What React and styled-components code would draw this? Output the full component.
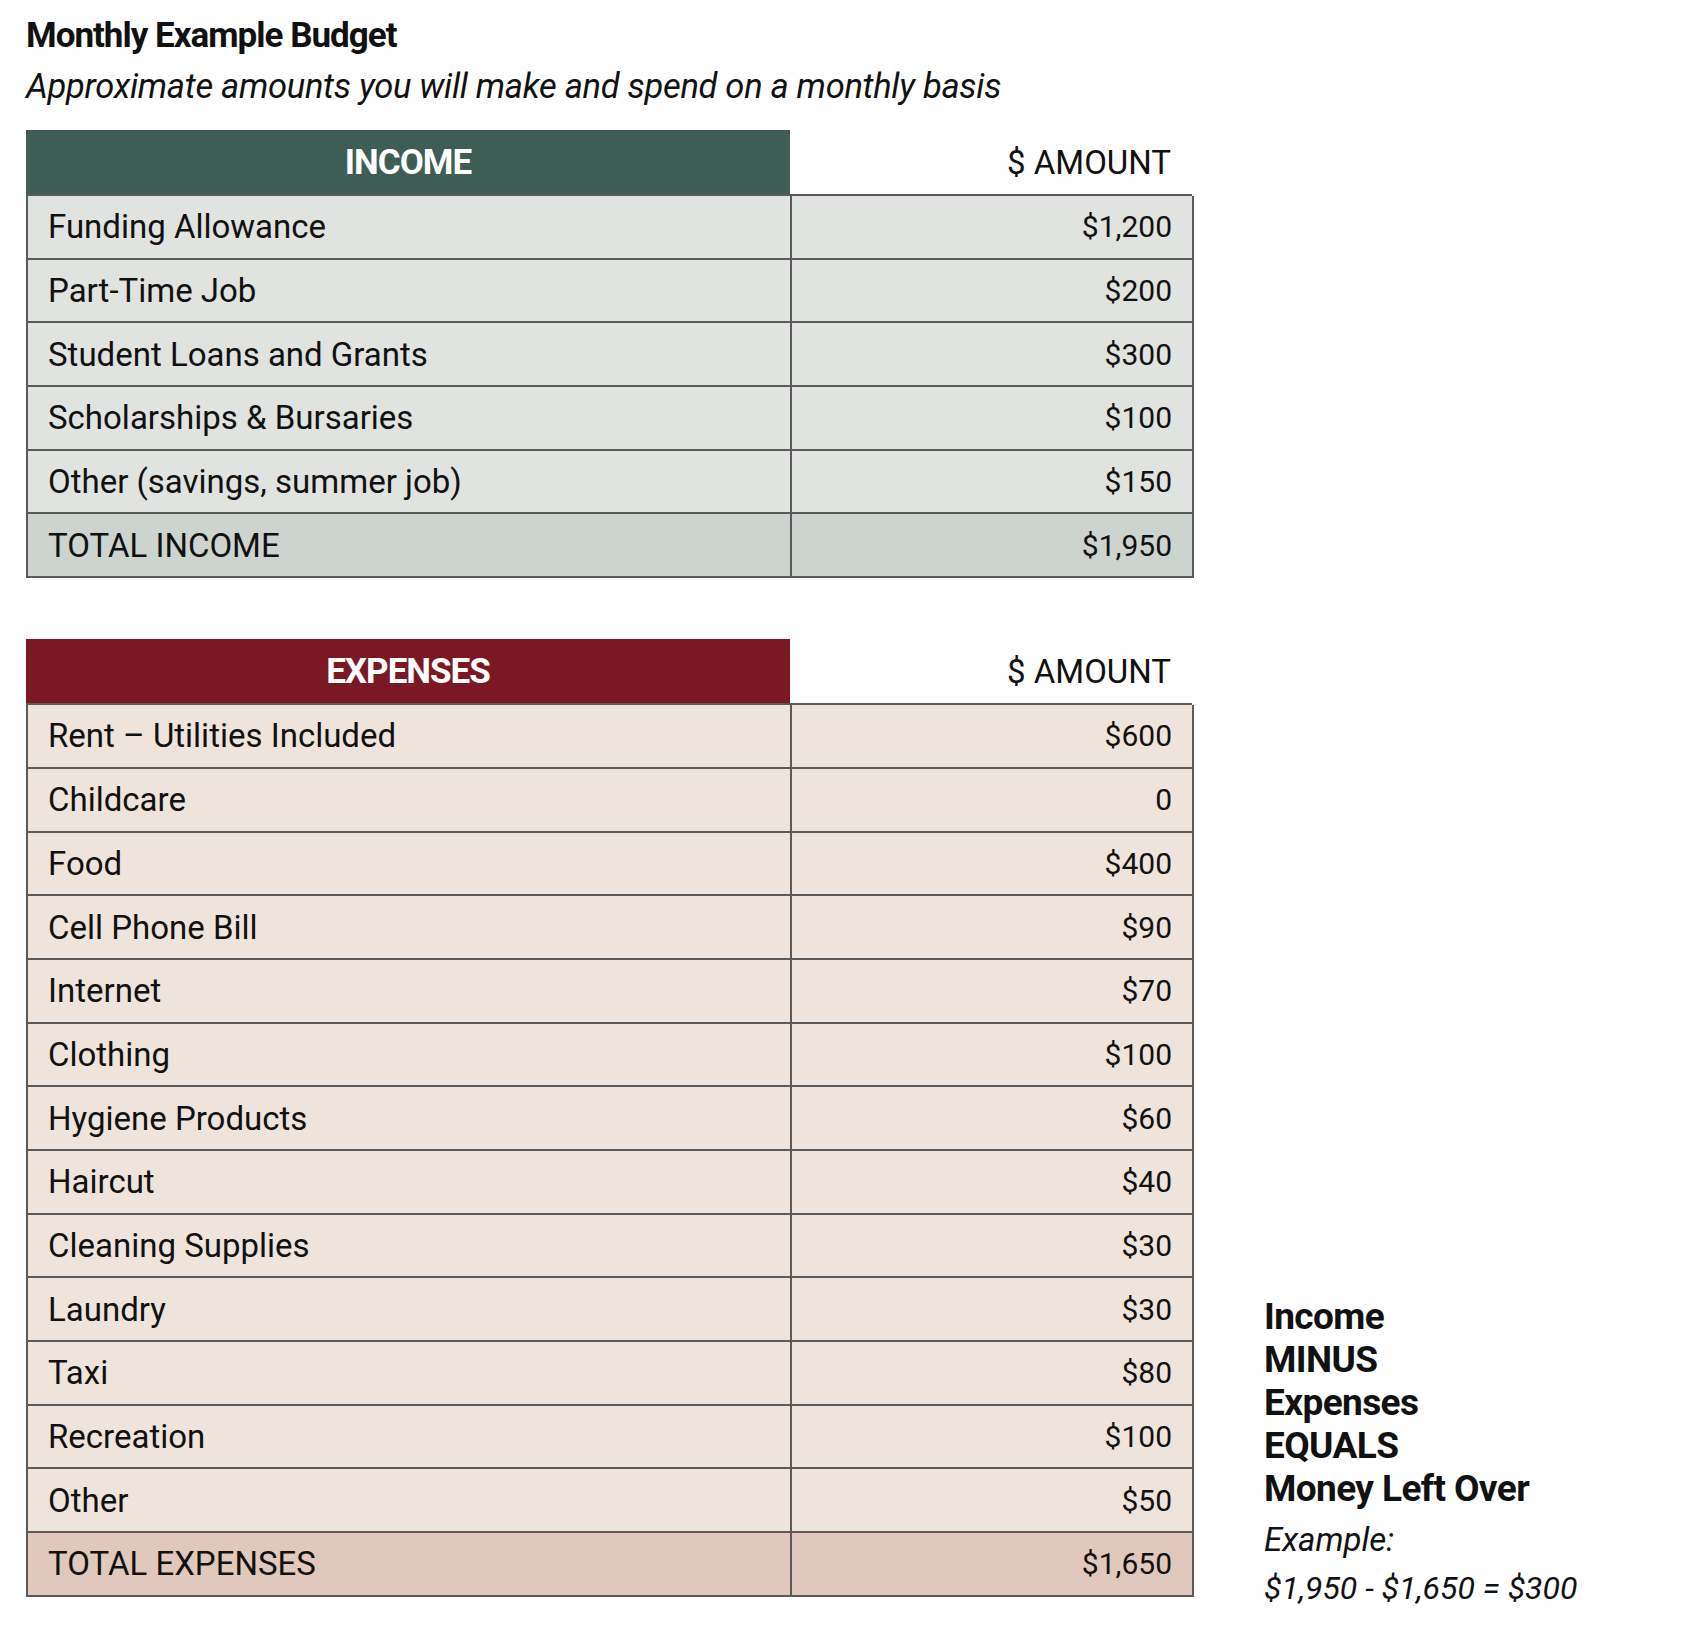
import React from 'react';
import styled, { createGlobalStyle } from 'styled-components';

const GlobalStyle = createGlobalStyle`
  body {
    margin: 0;
    background: #ffffff;
    font-family: Roboto, "Liberation Sans", sans-serif;
    color: #111;
  }
`;

const Page = styled.div`
  padding: 16px 0 40px 26px;
`;

const Title = styled.h1`
  margin: 0;
  font-size: 35px;
  font-weight: 700;
  letter-spacing: -1px;
  line-height: 40px;
`;

const Subtitle = styled.p`
  margin: 5px 0 0 0;
  font-size: 34.5px;
  font-style: italic;
  line-height: 50px;
  letter-spacing: -0.3px;
`;

const Main = styled.div`
  display: flex;
  align-items: flex-end;
  gap: 72px;
  margin-top: 19px;
`;

const Tables = styled.div`
  display: flex;
  flex-direction: column;
  gap: 61px;
  width: 1166px;
`;

const HeadRow = styled.div`
  display: grid;
  grid-template-columns: 764px 402px;
  height: 64px;
`;

const HeadLabel = styled.div`
  background: ${props => props.color};
  color: #fff;
  display: flex;
  align-items: center;
  justify-content: center;
  font-size: 35px;
  font-weight: 700;
  letter-spacing: -1px;
`;

const HeadAmount = styled.div`
  display: flex;
  align-items: center;
  justify-content: flex-end;
  padding-right: 21px;
  font-size: 33px;
`;

const Body = styled.div`
  display: grid;
  grid-template-columns: 764px 402px;
  border-top: 2px solid #5a5a5a;
  border-left: 2px solid #5a5a5a;
`;

const Cell = styled.div`
  height: 61.7px;
  display: flex;
  align-items: center;
  justify-content: ${props => (props.right ? 'flex-end' : 'flex-start')};
  padding: 0 20px;
  background: ${props => props.bg};
  border-right: 2px solid #5a5a5a;
  border-bottom: 2px solid #5a5a5a;
  font-size: ${props => (props.right ? '30px' : '33px')};
  box-sizing: content-box;
`;

const Side = styled.div`
  display: flex;
  flex-direction: column;
  margin-bottom: -16px;
`;

const SideLine = styled.div`
  font-size: 37px;
  font-weight: 700;
  line-height: 43px;
  letter-spacing: -0.6px;
`;

const SideNote = styled.div`
  font-size: ${props => (props.first ? '33px' : '32px')};
  font-style: italic;
  line-height: 49px;
  margin-top: ${props => (props.first ? '5px' : '0')};
`;

const income = [
  ['Funding Allowance', '$1,200'],
  ['Part-Time Job', '$200'],
  ['Student Loans and Grants', '$300'],
  ['Scholarships & Bursaries', '$100'],
  ['Other (savings, summer job)', '$150'],
];

const expenses = [
  ['Rent – Utilities Included', '$600'],
  ['Childcare', '0'],
  ['Food', '$400'],
  ['Cell Phone Bill', '$90'],
  ['Internet', '$70'],
  ['Clothing', '$100'],
  ['Hygiene Products', '$60'],
  ['Haircut', '$40'],
  ['Cleaning Supplies', '$30'],
  ['Laundry', '$30'],
  ['Taxi', '$80'],
  ['Recreation', '$100'],
  ['Other', '$50'],
];

const BudgetTable = ({ title, color, rows, total, rowBg, totalBg }) => (
  <div>
    <HeadRow>
      <HeadLabel color={color}>{title}</HeadLabel>
      <HeadAmount>$ AMOUNT</HeadAmount>
    </HeadRow>
    <Body>
      {rows.map(([label, amount]) => (
        <React.Fragment key={label}>
          <Cell bg={rowBg}>{label}</Cell>
          <Cell bg={rowBg} right>{amount}</Cell>
        </React.Fragment>
      ))}
      <Cell bg={totalBg}>{total[0]}</Cell>
      <Cell bg={totalBg} right>{total[1]}</Cell>
    </Body>
  </div>
);

export default function App() {
  return (
    <Page>
      <GlobalStyle />
      <Title>Monthly Example Budget</Title>
      <Subtitle>Approximate amounts you will make and spend on a monthly basis</Subtitle>
      <Main>
        <Tables>
          <BudgetTable
            title="INCOME"
            color="#3e5d54"
            rows={income}
            total={['TOTAL INCOME', '$1,950']}
            rowBg="#e1e3e0"
            totalBg="#cdd3cf"
          />
          <BudgetTable
            title="EXPENSES"
            color="#7a1824"
            rows={expenses}
            total={['TOTAL EXPENSES', '$1,650']}
            rowBg="#efe4dc"
            totalBg="#e0c9bc"
          />
        </Tables>
        <Side>
          <SideLine>Income</SideLine>
          <SideLine>MINUS</SideLine>
          <SideLine>Expenses</SideLine>
          <SideLine>EQUALS</SideLine>
          <SideLine>Money Left Over</SideLine>
          <SideNote first>Example:</SideNote>
          <SideNote>$1,950 - $1,650 = $300</SideNote>
        </Side>
      </Main>
    </Page>
  );
}
